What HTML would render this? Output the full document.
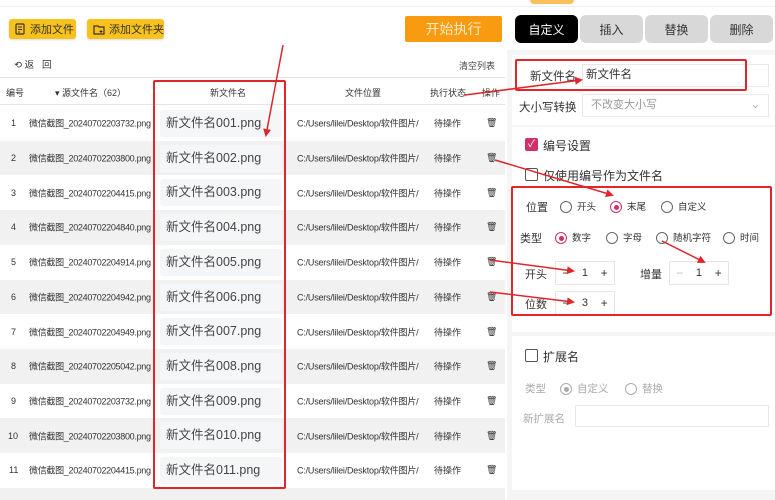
<!DOCTYPE html>
<html><head><meta charset="utf-8"><style>
*{margin:0;padding:0;box-sizing:border-box}
html,body{width:775px;height:500px;overflow:hidden}
body{background:#fff;font-family:"Liberation Sans","Noto Sans CJK SC",sans-serif;color:#333;position:relative}
.a{position:absolute}
.ybtn{position:absolute;background:#f8c21c;border-radius:3px;font-size:11px;color:#333;display:flex;align-items:center;gap:4px;padding-left:6px;box-shadow:0 1px 2px rgba(0,0,0,.15)}
.tab{position:absolute;top:15px;height:28px;width:63px;border-radius:6px;background:#d8d8d8;font-size:12px;display:flex;align-items:center;justify-content:center;color:#333}
.row{position:absolute;left:0;width:505px;height:34.7px;font-size:9px;color:#333}
.row.g{background:#f1f1f1}
.row span{position:absolute;top:50%;transform:translateY(-50%);white-space:nowrap;overflow:hidden}
.row span.s{left:29px;width:124px;letter-spacing:-0.3px}
.row span.l{left:297px;width:130px;letter-spacing:-0.2px}
.nb{position:absolute;left:160px;top:4px;width:122px;height:27px;background:#f5f6f8;border-radius:3px;font-size:12.5px;color:#444;padding-left:6px;line-height:27px}
.red{position:absolute;border:2px solid #e0262a;border-radius:2px}
.rad{display:inline-block;width:12px;height:12px;border:1px solid #666;border-radius:50%;vertical-align:middle;position:relative;margin-right:5px}
.rad.on{border-color:#d0306a}
.rad.on:after{content:"";position:absolute;left:2.5px;top:2.5px;width:5px;height:5px;border-radius:50%;background:#d0306a}
.rad.gr{border-color:#aaa}
.rad.gr:after{background:#aaa}
.rl{position:absolute;font-size:9.5px;color:#333;white-space:nowrap}
.stp{position:absolute;height:24px;border:1px solid #e6e6e6;background:#fff;font-size:12px;display:flex;align-items:center;justify-content:space-around;width:60px}
</style></head><body>
<div class="a" style="left:0;top:6px;width:775px;height:1px;background:#eee"></div>
<div class="a" style="left:530px;top:0;width:44px;height:4px;background:#fbc05a;border-radius:0 0 4px 4px"></div>

<div class="ybtn" style="left:9px;top:19px;width:67px;height:20px"><svg width="11" height="12" viewBox="0 0 11 12"><rect x="1" y="1" width="8" height="10" rx="1" fill="none" stroke="#333" stroke-width="1.2"/><path d="M3 4h4M3 6.5h4M3 9h2" stroke="#333"/></svg>添加文件</div>
<div class="ybtn" style="left:87px;top:19px;width:77px;height:20px"><svg width="12" height="11" viewBox="0 0 12 11"><path d="M1 2h4l1 1h5v7H1z" fill="none" stroke="#333" stroke-width="1.2"/><path d="M8 6v3M6.5 7.5h3" stroke="#333"/></svg>添加文件夹</div>
<div class="a" style="left:405px;top:16px;width:97px;height:26px;background:#f99b10;color:#fde8c4;font-size:14px;display:flex;align-items:center;justify-content:center;border-radius:2px">开始执行</div>

<div class="tab" style="left:515px;background:#000;color:#fff">自定义</div>
<div class="tab" style="left:580px">插入</div>
<div class="tab" style="left:645px">替换</div>
<div class="tab" style="left:710px">删除</div>

<div class="a" style="left:14px;top:57px;font-size:9.5px;color:#333">⟲ 返 &nbsp;&nbsp;回</div>
<div class="a" style="left:459px;top:59px;font-size:9px;color:#444">清空列表</div>
<div class="a" style="left:0;top:77px;width:505px;height:1px;background:#e5e5e5"></div>
<div class="a" style="left:0;top:104px;width:505px;height:1px;background:#e5e5e5"></div>
<div class="a" style="left:6px;top:86px;font-size:9px">编号</div>
<div class="a" style="left:55px;top:86px;font-size:9px">▾ 源文件名（62）</div>
<div class="a" style="left:210px;top:86px;font-size:9px">新文件名</div>
<div class="a" style="left:345px;top:86px;font-size:9px">文件位置</div>
<div class="a" style="left:430px;top:86px;font-size:9px">执行状态</div>
<div class="a" style="left:482px;top:86px;font-size:9px">操作</div>

<div class="a" style="left:0;top:106px;">
<div class="row" style="top:0"><span style="left:11px">1</span><span class="s">微信截图_20240702203732.png</span><div class="nb">新文件名001.png</div><span class="l">C:/Users/lilei/Desktop/软件图片/</span><span style="left:434px">待操作</span><span style="left:486px">🗑</span></div>
<div class="row g" style="top:34.7px"><span style="left:11px">2</span><span class="s">微信截图_20240702203800.png</span><div class="nb">新文件名002.png</div><span class="l">C:/Users/lilei/Desktop/软件图片/</span><span style="left:434px">待操作</span><span style="left:486px">🗑</span></div>
<div class="row" style="top:69.4px"><span style="left:11px">3</span><span class="s">微信截图_20240702204415.png</span><div class="nb">新文件名003.png</div><span class="l">C:/Users/lilei/Desktop/软件图片/</span><span style="left:434px">待操作</span><span style="left:486px">🗑</span></div>
<div class="row g" style="top:104.1px"><span style="left:11px">4</span><span class="s">微信截图_20240702204840.png</span><div class="nb">新文件名004.png</div><span class="l">C:/Users/lilei/Desktop/软件图片/</span><span style="left:434px">待操作</span><span style="left:486px">🗑</span></div>
<div class="row" style="top:138.8px"><span style="left:11px">5</span><span class="s">微信截图_20240702204914.png</span><div class="nb">新文件名005.png</div><span class="l">C:/Users/lilei/Desktop/软件图片/</span><span style="left:434px">待操作</span><span style="left:486px">🗑</span></div>
<div class="row g" style="top:173.5px"><span style="left:11px">6</span><span class="s">微信截图_20240702204942.png</span><div class="nb">新文件名006.png</div><span class="l">C:/Users/lilei/Desktop/软件图片/</span><span style="left:434px">待操作</span><span style="left:486px">🗑</span></div>
<div class="row" style="top:208.2px"><span style="left:11px">7</span><span class="s">微信截图_20240702204949.png</span><div class="nb">新文件名007.png</div><span class="l">C:/Users/lilei/Desktop/软件图片/</span><span style="left:434px">待操作</span><span style="left:486px">🗑</span></div>
<div class="row g" style="top:242.9px"><span style="left:11px">8</span><span class="s">微信截图_20240702205042.png</span><div class="nb">新文件名008.png</div><span class="l">C:/Users/lilei/Desktop/软件图片/</span><span style="left:434px">待操作</span><span style="left:486px">🗑</span></div>
<div class="row" style="top:277.6px"><span style="left:11px">9</span><span class="s">微信截图_20240702203732.png</span><div class="nb">新文件名009.png</div><span class="l">C:/Users/lilei/Desktop/软件图片/</span><span style="left:434px">待操作</span><span style="left:486px">🗑</span></div>
<div class="row g" style="top:312.3px"><span style="left:8px">10</span><span class="s">微信截图_20240702203800.png</span><div class="nb">新文件名010.png</div><span class="l">C:/Users/lilei/Desktop/软件图片/</span><span style="left:434px">待操作</span><span style="left:486px">🗑</span></div>
<div class="row" style="top:347px"><span style="left:9px">11</span><span class="s">微信截图_20240702204415.png</span><div class="nb">新文件名011.png</div><span class="l">C:/Users/lilei/Desktop/软件图片/</span><span style="left:434px">待操作</span><span style="left:486px">🗑</span></div>
<div class="row g" style="top:381.7px;height:20px"></div>
</div>

<!-- right panel -->
<div class="a" style="left:507px;top:50px;width:268px;height:450px;background:#f5f5f5"></div>
<div class="a" style="left:512px;top:55px;width:263px;height:70px;background:#fff"></div>
<div class="a" style="left:512px;top:127px;width:263px;height:205px;background:#fff"></div>
<div class="a" style="left:512px;top:336px;width:263px;height:154px;background:#fff"></div>

<div class="a" style="left:530px;top:68px;font-size:11.5px">新文件名</div>
<div class="a" style="left:582px;top:64px;width:187px;height:23px;border:1px solid #e8e8e8;font-size:11.5px;padding-left:3px;line-height:21px">新文件名</div>
<div class="a" style="left:519px;top:99px;font-size:11.5px">大小写转换</div>
<div class="a" style="left:582px;top:94px;width:187px;height:23px;border:1px solid #e8e8e8;font-size:11px;padding-left:8px;line-height:21px;color:#999">不改变大小写<span style="position:absolute;right:8px;color:#aaa">⌄</span></div>

<div class="a" style="left:525px;top:138px;width:13px;height:13px;background:#d0306a;border-radius:2px;color:#fff;font-size:10px;line-height:13px;text-align:center">✓</div>
<div class="a" style="left:543px;top:137px;font-size:12px">编号设置</div>
<div class="a" style="left:525px;top:168px;width:13px;height:13px;border:1px solid #555;border-radius:2px"></div>
<div class="a" style="left:543px;top:167px;font-size:12px">仅使用编号作为文件名</div>

<div class="a" style="left:526px;top:199px;font-size:11px">位置</div>
<div class="rl" style="left:560px;top:199px"><i class="rad"></i>开头</div>
<div class="rl" style="left:610px;top:199px"><i class="rad on"></i>末尾</div>
<div class="rl" style="left:661px;top:199px"><i class="rad"></i>自定义</div>
<div class="a" style="left:520px;top:230px;font-size:11px">类型</div>
<div class="rl" style="left:555px;top:230px"><i class="rad on"></i>数字</div>
<div class="rl" style="left:606px;top:230px"><i class="rad"></i>字母</div>
<div class="rl" style="left:656px;top:230px"><i class="rad"></i>随机字符</div>
<div class="rl" style="left:723px;top:230px"><i class="rad"></i>时间</div>

<div class="a" style="left:525px;top:266px;font-size:11px">开头</div>
<div class="stp" style="left:555px;top:261px"><span>−</span><span style="font-size:11px">1</span><span>+</span></div>
<div class="a" style="left:640px;top:266px;font-size:11px">增量</div>
<div class="stp" style="left:669px;top:261px"><span style="color:#bbb">−</span><span style="font-size:11px">1</span><span>+</span></div>
<div class="a" style="left:525px;top:296px;font-size:11px">位数</div>
<div class="stp" style="left:555px;top:291px"><span>−</span><span style="font-size:11px">3</span><span>+</span></div>

<div class="a" style="left:525px;top:349px;width:13px;height:13px;border:1px solid #555;border-radius:2px"></div>
<div class="a" style="left:543px;top:348px;font-size:12px">扩展名</div>
<div class="a" style="left:525px;top:381px;font-size:10.5px;color:#aaa">类型</div>
<div class="rl" style="left:560px;top:381px;color:#aaa;font-size:10.5px"><i class="rad on gr"></i>自定义</div>
<div class="rl" style="left:625px;top:381px;color:#aaa;font-size:10.5px"><i class="rad" style="border-color:#aaa"></i>替换</div>
<div class="a" style="left:523px;top:411px;font-size:10.5px;color:#aaa">新扩展名</div>
<div class="a" style="left:575px;top:405px;width:194px;height:22px;border:1px solid #e8e8e8"></div>

<!-- red boxes -->
<div class="red" style="left:153px;top:80px;width:133px;height:409px"></div>
<div class="red" style="left:515px;top:59px;width:232px;height:32px"></div>
<div class="red" style="left:511px;top:186px;width:261px;height:130px"></div>

<svg class="a" style="left:0;top:0" width="775" height="500">
<defs><marker id="m" markerWidth="8" markerHeight="8" refX="6" refY="4" orient="auto" markerUnits="userSpaceOnUse"><path d="M0 0L8 4L0 8z" fill="#e0262a"/></marker></defs>
<g stroke="#e0262a" stroke-width="1.5" fill="none" marker-end="url(#m)">
<path d="M283 45L266 135"/>
<path d="M465 95L581 80"/>
<path d="M495 160L612 195"/>
<path d="M490 260L573 271"/>
<path d="M490 292L573 302"/>
<path d="M662 241L704 262"/>
</g></svg>
</body></html>
